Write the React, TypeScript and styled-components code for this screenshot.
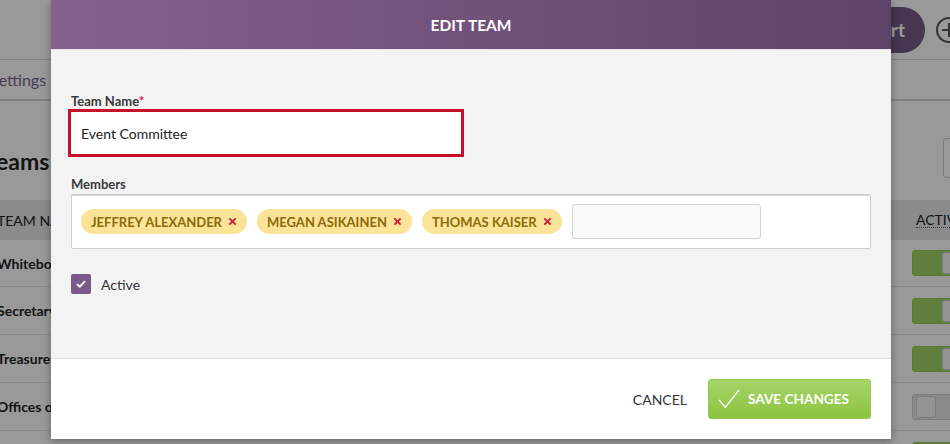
import React from "react";
import styled, { createGlobalStyle } from "styled-components";

const GlobalStyle = createGlobalStyle`
  * { box-sizing: border-box; }
  body {
    margin: 0;
    font-family: Lato, "Open Sans", Arial, sans-serif;
    color: #333;
    overflow: hidden;
  }
`;

const Page = styled.div`
  position: relative;
  width: 950px;
  height: 444px;
  overflow: hidden;
  background: #fff;
`;

/* ---------- underlying page ---------- */

const TopBar = styled.div`
  height: 60px;
  border-bottom: 1px solid #dcdcdc;
  display: flex;
  align-items: center;
  justify-content: flex-end;
  gap: 11px;
  margin-right: -12px;
`;

const PillButton = styled.div`
  height: 46px;
  padding: 0 20px 0 30px;
  border-radius: 23px;
  background: #765a86;
  color: #fff;
  font-weight: 700;
  font-size: 19px;
  display: flex;
  align-items: center;
`;

const PlusCircle = styled.div`
  width: 26px;
  height: 26px;
  border-radius: 50%;
  border: 2px solid #555;
  position: relative;
  &::before,
  &::after {
    content: "";
    position: absolute;
    background: #555;
    left: 50%;
    top: 50%;
    transform: translate(-50%, -50%);
  }
  &::before { width: 14px; height: 2px; }
  &::after { width: 2px; height: 14px; }
`;

const Tabs = styled.div`
  height: 41px;
  border-bottom: 2px solid #d6d6d6;
  display: flex;
  align-items: center;
  margin-left: -10px;
`;

const Tab = styled.span`
  font-size: 16px;
  color: #7a6490;
`;

const TitleRow = styled.div`
  height: 99px;
  display: flex;
  align-items: center;
  justify-content: space-between;
  padding-top: 20px;
  margin-left: -15px;
  margin-right: -41px;
`;

const Title = styled.h1`
  margin: 0;
  font-size: 23px;
  font-weight: 700;
  color: #222;
`;

const Count = styled.span`
  color: #6b4d7a;
`;

const SearchBox = styled.div`
  width: 48px;
  height: 40px;
  border: 1px solid #ccc;
  border-radius: 3px;
  background: #fff;
  margin-top: -6px;
`;

const Table = styled.div`
  display: grid;
  grid-template-columns: 1fr 60px;
  margin-left: -3px;
  margin-right: -26px;
`;

const HeadCell = styled.div`
  height: 40px;
  background: #e8e8e8;
  display: flex;
  align-items: center;
  font-size: 14px;
  color: #222;
  text-transform: uppercase;
`;

const HeadAbbr = styled.span`
  border-bottom: 1px dotted #7b5a8a;
  line-height: 15px;
`;

const Cell = styled.div<{ $first?: boolean }>`
  height: ${(p) => (p.$first ? 47 : 48)}px;
  border-bottom: 1px solid #e4e4e4;
  display: flex;
  align-items: center;
  font-size: 14px;
  font-weight: 700;
  color: #222;
`;

const Toggle = styled.div<{ $on: boolean }>`
  width: 64px;
  height: 26px;
  border-radius: 3px;
  background: ${(p) => (p.$on ? "#a1d364" : "#e6e6e6")};
  border: 1px solid ${(p) => (p.$on ? "#9acb5c" : "#d0d0d0")};
  display: flex;
  align-items: center;
  padding-left: ${(p) => (p.$on ? "29px" : "3px")};
  margin-left: -4px;
  &::after {
    content: "";
    width: 18px;
    height: 20px;
    border-radius: 3px;
    background: #f7f7f7;
    border: 1px solid #cfcfcf;
  }
`;

const Overlay = styled.div`
  position: absolute;
  inset: 0;
  background: rgba(0, 0, 0, 0.4);
`;

/* ---------- modal ---------- */

const Modal = styled.div`
  position: absolute;
  left: 51px;
  top: 0;
  width: 840px;
  height: 439px;
  background: #f3f3f3;
  box-shadow: 0 2px 8px rgba(0, 0, 0, 0.35);
  display: flex;
  flex-direction: column;
`;

const ModalHeader = styled.div`
  height: 50px;
  background: linear-gradient(90deg, #84618f 0%, #6e5079 55%, #5e4368 100%);
  border-bottom: 1px solid #e6e6e6;
  display: flex;
  align-items: center;
  justify-content: center;
  color: #fff;
  font-weight: 700;
  font-size: 15.5px;
`;

const ModalBody = styled.div`
  flex: 1;
  padding: 43px 20px 0 20px;
  display: flex;
  flex-direction: column;
`;

const Label = styled.label`
  display: block;
  font-size: 13px;
  font-weight: 700;
  color: #3a3a3a;
`;

const Required = styled.span`
  color: #d0213b;
`;

const NameInput = styled.div`
  width: 396px;
  height: 48px;
  margin-left: -3px;
  border: 3px solid #c8102e;
  background: #fff;
  display: flex;
  align-items: center;
  padding-left: 10px;
  font-size: 14px;
  color: #222;
`;

const MembersLabel = styled(Label)`
  margin-top: 19px;
  margin-bottom: 2px;
`;

const MembersBox = styled.div`
  height: 55px;
  border: 1px solid #cfcfcf;
  border-radius: 2px;
  background: #fff;
  display: flex;
  align-items: center;
  gap: 10px;
  padding-left: 9px;
  box-shadow: inset 0 1px 0 #d6d6d6;
`;

const Chip = styled.span`
  height: 25px;
  border-radius: 13px;
  background: #fbe498;
  color: #8b6b09;
  font-size: 13px;
  font-weight: 700;
  display: inline-flex;
  align-items: center;
  gap: 6px;
  padding: 0 10px;
  text-transform: uppercase;
`;

const ChipRemove = styled.svg`
  width: 9px;
  height: 9px;
  stroke: #d0213b;
  stroke-width: 2.2;
`;

const TagInput = styled.div`
  width: 189px;
  height: 35px;
  border: 1px solid #d2d2d2;
  border-radius: 3px;
  background: #f9f9f9;
`;

const CheckRow = styled.div`
  margin-top: 25px;
  display: flex;
  align-items: center;
  gap: 10px;
  font-size: 14px;
  color: #333;
`;

const CheckBox = styled.span`
  width: 20px;
  height: 20px;
  border-radius: 2px;
  background: #7b5a8a;
  display: flex;
  align-items: center;
  justify-content: center;
`;

const ModalFooter = styled.div`
  height: 81px;
  background: #fff;
  border-top: 1px solid #dedede;
  display: flex;
  align-items: center;
  justify-content: flex-end;
  gap: 20px;
  padding-right: 20px;
`;

const CancelButton = styled.button`
  border: 0;
  background: none;
  font-family: inherit;
  font-size: 14px;
  color: #333;
  padding: 0;
  margin-right: 1px;
  cursor: pointer;
`;

const SaveButton = styled.button`
  width: 163px;
  height: 40px;
  border: 1px solid #93c852;
  border-radius: 3px;
  background: linear-gradient(180deg, #a6d46a 0%, #8cc43f 100%);
  color: #fff;
  font-family: inherit;
  font-weight: 700;
  font-size: 13.6px;
  display: flex;
  align-items: center;
  gap: 8px;
  padding-left: 9px;
  cursor: pointer;
`;

const CheckIcon = styled.svg`
  width: 22px;
  height: 22px;
  fill: none;
  stroke: #fff;
  stroke-width: 1.5;
`;

const members = ["Jeffrey Alexander", "Megan Asikainen", "Thomas Kaiser"];
const rows = [
  { name: "Whiteboard", on: true },
  { name: "Secretary", on: true },
  { name: "Treasurer", on: true },
  { name: "Offices of", on: false },
  { name: "Events", on: true },
];

export default function App() {
  return (
    <Page>
      <GlobalStyle />
      <TopBar>
        <PillButton>Export</PillButton>
        <PlusCircle />
      </TopBar>
      <Tabs>
        <Tab>Settings</Tab>
      </Tabs>
      <TitleRow>
        <Title>
          Teams <Count>(5)</Count>
        </Title>
        <SearchBox />
      </TitleRow>
      <Table>
        <HeadCell>Team Name</HeadCell>
        <HeadCell>
          <HeadAbbr>Active</HeadAbbr>
        </HeadCell>
        {rows.map((r, i) => (
          <React.Fragment key={r.name}>
            <Cell $first={i === 0}>{r.name}</Cell>
            <Cell $first={i === 0}>
              <Toggle $on={r.on} />
            </Cell>
          </React.Fragment>
        ))}
      </Table>

      <Overlay />

      <Modal>
        <ModalHeader>EDIT TEAM</ModalHeader>
        <ModalBody>
          <Label>
            Team Name<Required>*</Required>
          </Label>
          <NameInput>Event Committee</NameInput>
          <MembersLabel>Members</MembersLabel>
          <MembersBox>
            {members.map((m) => (
              <Chip key={m}>
                {m}
                <ChipRemove viewBox="0 0 10 10">
                  <path d="M1.5 1.5 L8.5 8.5 M8.5 1.5 L1.5 8.5" />
                </ChipRemove>
              </Chip>
            ))}
            <TagInput />
          </MembersBox>
          <CheckRow>
            <CheckBox>
              <svg width="10" height="8" viewBox="0 0 10 8">
                <path d="M1 4.2 L3.8 6.6 L9 1.2" fill="none" stroke="#fff" strokeWidth="1.9" />
              </svg>
            </CheckBox>
            Active
          </CheckRow>
        </ModalBody>
        <ModalFooter>
          <CancelButton>CANCEL</CancelButton>
          <SaveButton>
            <CheckIcon viewBox="0 0 24 24">
              <path d="M1 13 L8 21 L23 2" />
            </CheckIcon>
            SAVE CHANGES
          </SaveButton>
        </ModalFooter>
      </Modal>
    </Page>
  );
}
